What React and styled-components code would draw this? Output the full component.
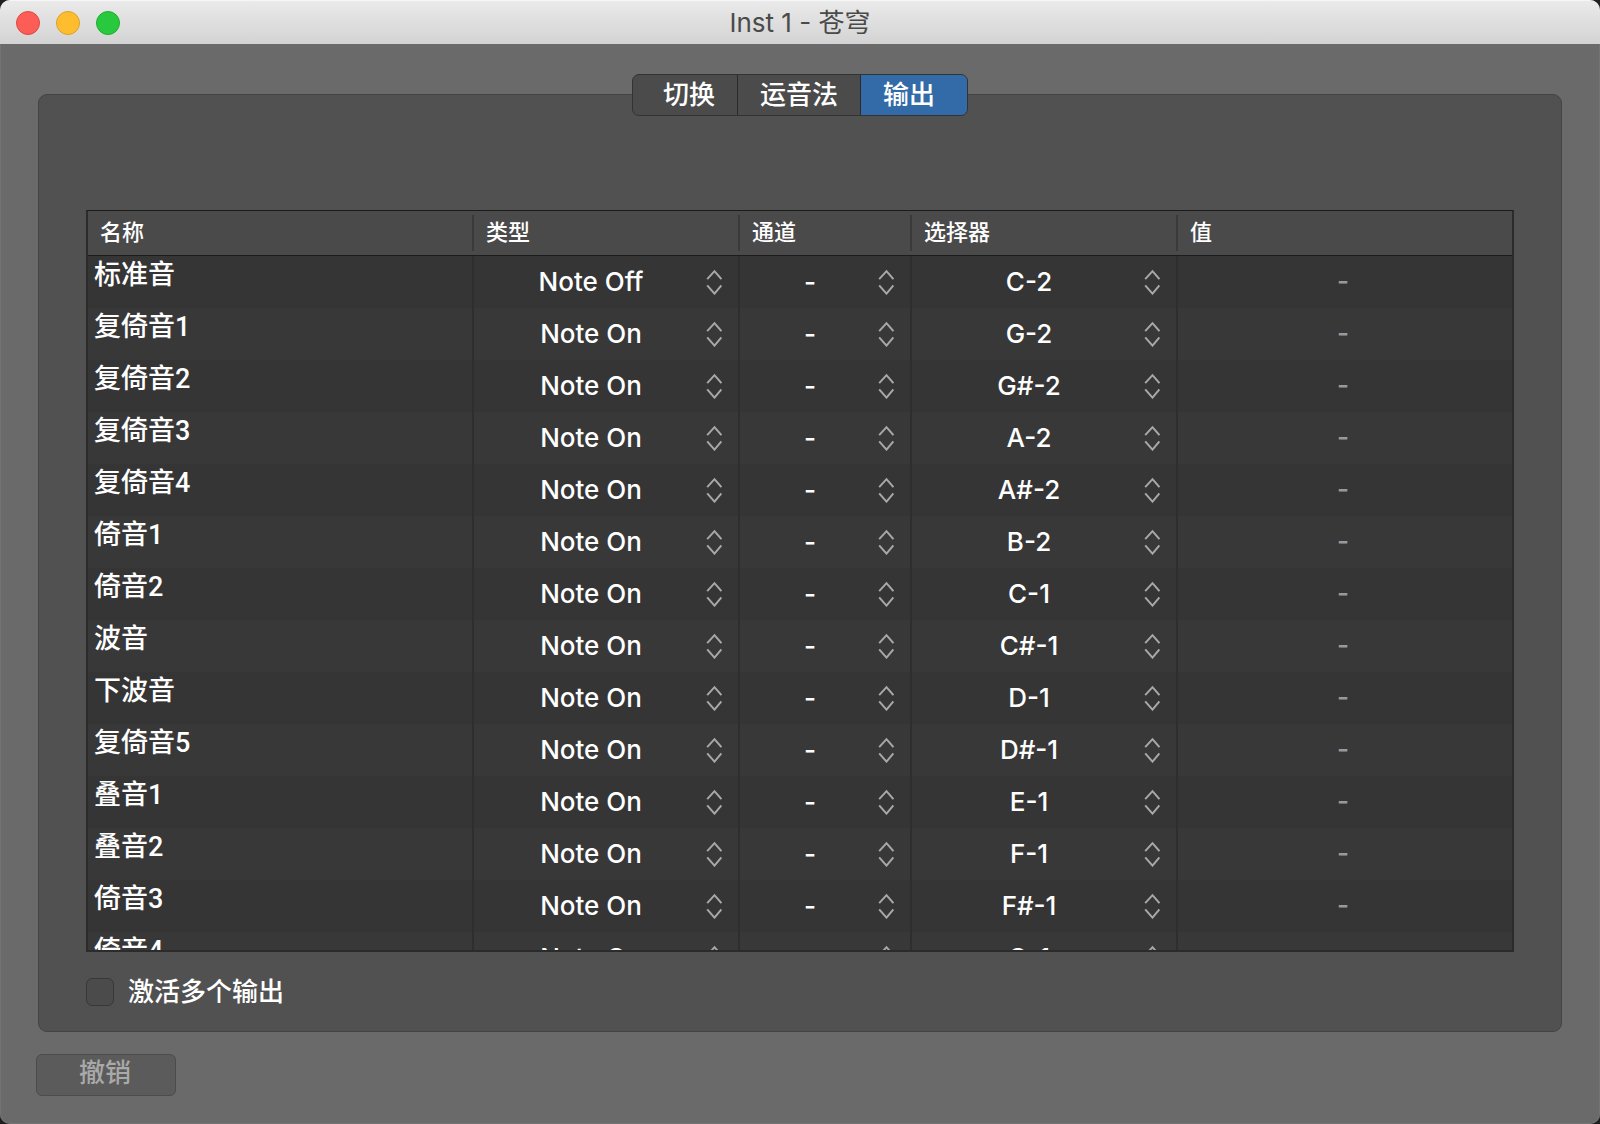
import React, { useState } from "react";
import styled, { createGlobalStyle } from "styled-components";

const GlobalStyle = createGlobalStyle`
  * { box-sizing: border-box; }
  body {
    margin: 0;
    background: #1f1f1f;
    font-family: Inter, "Noto Sans CJK SC", sans-serif;
    font-size: 26px;
    font-weight: 500;
    color: #fff;
  }
  button, select { font: inherit; color: inherit; }
`;

const Window = styled.div`
  height: 100vh;
  min-height: 560px;
  display: flex;
  flex-direction: column;
  overflow: hidden;
  border-radius: 10px;
  background: #6a6a6a;
  box-shadow: inset 0 0 0 1px #747474;
`;

const TitleBar = styled.header`
  flex: none;
  display: grid;
  grid-template-columns: 1fr auto 1fr;
  align-items: center;
  height: 44px;
  padding: 0 16px;
  background: linear-gradient(#eaeaea, #d3d3d3);
  border-top: 1px solid #f6f6f6;
`;

const Lights = styled.div`
  display: flex;
  gap: 16px;
`;

const Light = styled.button`
  width: 24px;
  height: 24px;
  padding: 0;
  border: 1px solid ${(p) => p.$edge};
  border-radius: 50%;
  background: ${(p) => p.$fill};
`;

const Title = styled.h1`
  margin: 0;
  font-size: 26px;
  line-height: 36px;
  font-weight: 400;
  color: #4a4a4a;
`;

const Content = styled.main`
  flex: 1;
  min-height: 0;
  display: flex;
  flex-direction: column;
  padding: 30px 38px 28px;
`;

const Tabs = styled.div`
  flex: none;
  align-self: center;
  z-index: 1;
  display: flex;
  height: 42px;
  margin-bottom: -22px;
  border: 1px solid #333;
  border-radius: 7px;
  overflow: hidden;
  background: #4b4b4b;
`;

const Tab = styled.button`
  padding: 0 22px;
  border: 0;
  line-height: 38px;
  background: ${(p) => (p.$active ? "#326ba8" : "transparent")};

  &:first-child { padding-left: 30px; }
  &:last-child { padding-right: 32px; }
  & + & { border-left: 1px solid #2b2b2b; }
`;

const Panel = styled.section`
  flex: 1;
  min-height: 0;
  display: flex;
  flex-direction: column;
  gap: 26px;
  padding: 115px 47px 25px;
  border: 1px solid #444;
  border-radius: 9px;
  background: #515151;
`;

const Scroller = styled.div`
  flex: 1;
  min-height: 0;
  overflow: auto;
  scrollbar-width: none;
  border: 2px solid #2b2b2b;
  border-top: 1px solid #1c1c1c;
  background: #353535;
`;

const Table = styled.table`
  width: 100%;
  table-layout: fixed;
  border-collapse: separate;
  border-spacing: 0;
`;

const Column = styled.col`
  width: ${(p) => p.$width};
`;

const HeadCell = styled.th`
  position: sticky;
  top: 0;
  z-index: 1;
  height: 45px;
  padding: 0;
  border-bottom: 1px solid #1c1c1c;
  background: #4a4a4a;
  font-size: 22px;
  font-weight: 500;
  text-align: left;
`;

const HeadLabel = styled.div`
  height: 36px;
  padding: 0 12px;
  line-height: 34px;
  border-right: 2px solid #3a3a3a;

  ${HeadCell}:last-child & { border-right-color: transparent; }
`;

const Row = styled.tr`
  background: #353535;
  &:nth-child(even) { background: #383838; }
`;

const Cell = styled.td`
  height: 52px;
  padding: 0;
  border-right: 2px solid #2e2e2e;
  &:last-child { border-right: 0; }
`;

const NameCell = styled(Cell)`
  padding: 0 6px;
  font-family: Roboto, "Noto Sans CJK SC", sans-serif;
  font-size: 27px;
  line-height: 38px;
  vertical-align: top;
`;

const ValueCell = styled(Cell)`
  padding-right: 4px;
  text-align: center;
  line-height: 50px;
  vertical-align: top;
  color: #9a9a9a;
`;

const SelectBox = styled.div`
  display: grid;
  align-items: center;
  height: 52px;

  > * { grid-area: 1 / 1; }
  > svg {
    justify-self: end;
    margin-right: 16px;
    pointer-events: none;
  }
`;

const Select = styled.select`
  appearance: none;
  width: 100%;
  height: 52px;
  padding: 0 30px 2px 0;
  border: 0;
  border-radius: 0;
  background: transparent;
  text-align: center;
  text-align-last: center;
`;

const Footer = styled.label`
  flex: none;
  align-self: flex-start;
  display: flex;
  align-items: center;
  gap: 14px;
  height: 28px;
  line-height: 28px;
`;

const Checkbox = styled.input`
  appearance: none;
  width: 28px;
  height: 28px;
  margin: 0;
  border: 1px solid #383838;
  border-radius: 6px;
  background: #4b4b4b;
  &:checked { background: #326ba8; }
`;

const UndoButton = styled.button`
  flex: none;
  align-self: flex-start;
  width: 140px;
  height: 42px;
  margin: 22px 0 0 -2px;
  padding: 0 2px 4px 0;
  border: 1px solid #4c4c4c;
  border-radius: 6px;
  line-height: 36px;
  background: #5b5b5b;
  color: #a9a9a9;
`;

const TABS = ["切换", "运音法", "输出"];

const COLUMNS = [
  { label: "名称", width: "386px" },
  { label: "类型", width: "266px" },
  { label: "通道", width: "172px" },
  { label: "选择器", width: "266px" },
  { label: "值", width: "auto" },
];

const ROWS = [
  ["标准音", "Note Off", "C-2"],
  ["复倚音1", "Note On", "G-2"],
  ["复倚音2", "Note On", "G#-2"],
  ["复倚音3", "Note On", "A-2"],
  ["复倚音4", "Note On", "A#-2"],
  ["倚音1", "Note On", "B-2"],
  ["倚音2", "Note On", "C-1"],
  ["波音", "Note On", "C#-1"],
  ["下波音", "Note On", "D-1"],
  ["复倚音5", "Note On", "D#-1"],
  ["叠音1", "Note On", "E-1"],
  ["叠音2", "Note On", "F-1"],
  ["倚音3", "Note On", "F#-1"],
  ["倚音4", "Note On", "G-1"],
];

function Stepper() {
  return (
    <svg width="16" height="26" viewBox="0 0 16 26" fill="none" stroke="#a8a8a8" strokeWidth="2" aria-hidden="true">
      <path d="M1.2 10.2 8.5 2.2 15.4 10.2M1.2 16.4 8.5 24.6 15.4 16.4" />
    </svg>
  );
}

function Picker({ label, value }) {
  return (
    <SelectBox>
      <Select aria-label={label} defaultValue={value}>
        <option>{value}</option>
      </Select>
      <Stepper />
    </SelectBox>
  );
}

export default function App() {
  const [tab, setTab] = useState("输出");

  return (
    <>
      <GlobalStyle />
      <Window>
        <TitleBar>
          <Lights>
            <Light aria-label="关闭" $fill="#fc5d57" $edge="#e2463f" />
            <Light aria-label="最小化" $fill="#fdbd2f" $edge="#dfa023" />
            <Light aria-label="缩放" $fill="#29c93f" $edge="#1dad2b" />
          </Lights>
          <Title>Inst 1 - 苍穹</Title>
        </TitleBar>
        <Content>
          <Tabs role="tablist">
            {TABS.map((name) => (
              <Tab
                key={name}
                role="tab"
                aria-selected={name === tab}
                $active={name === tab}
                onClick={() => setTab(name)}
              >
                {name}
              </Tab>
            ))}
          </Tabs>
          <Panel>
            <Scroller>
              <Table>
                <colgroup>
                  {COLUMNS.map((c) => (
                    <Column key={c.label} $width={c.width} />
                  ))}
                </colgroup>
                <thead>
                  <tr>
                    {COLUMNS.map((c) => (
                      <HeadCell key={c.label} scope="col">
                        <HeadLabel>{c.label}</HeadLabel>
                      </HeadCell>
                    ))}
                  </tr>
                </thead>
                <tbody>
                  {ROWS.map(([name, type, selector]) => (
                    <Row key={name}>
                      <NameCell>{name}</NameCell>
                      <Cell>
                        <Picker label={`${name} 类型`} value={type} />
                      </Cell>
                      <Cell>
                        <Picker label={`${name} 通道`} value="-" />
                      </Cell>
                      <Cell>
                        <Picker label={`${name} 选择器`} value={selector} />
                      </Cell>
                      <ValueCell>-</ValueCell>
                    </Row>
                  ))}
                </tbody>
              </Table>
            </Scroller>
            <Footer>
              <Checkbox type="checkbox" />
              激活多个输出
            </Footer>
          </Panel>
          <UndoButton disabled>撤销</UndoButton>
        </Content>
      </Window>
    </>
  );
}
